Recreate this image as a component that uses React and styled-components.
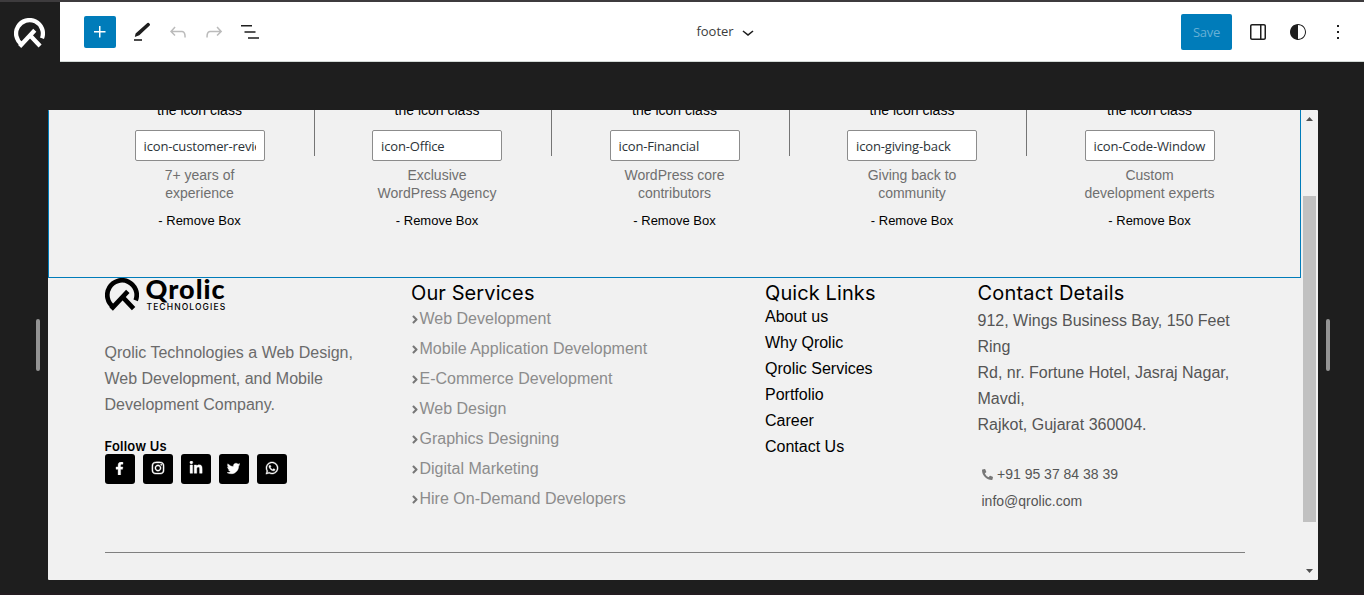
import React from "react";
import styled, { createGlobalStyle } from "styled-components";
import { FaFacebookF, FaInstagram, FaLinkedinIn, FaTwitter, FaWhatsapp, FaPhoneAlt, FaAngleRight } from "react-icons/fa";

const sans = `"Liberation Sans", Arial, sans-serif`;
const ui = `"Open Sans", "Noto Sans", sans-serif`;

const GlobalStyle = createGlobalStyle`
  *, *::before, *::after { box-sizing: border-box; }
  body { margin: 0; background: #1e1e1e; font-family: ${sans}; overflow: hidden; }
  h2, p, ul { margin: 0; padding: 0; font-weight: 400; }
  ul { list-style: none; }
  svg { display: block; flex: none; }
`;

const Editor = styled.div`
  display: flex;
  flex-direction: column;
  width: 1364px;
  height: 595px;
  border-top: 2px solid #3d3b3d;
  border-bottom: 2px solid #231c20;
  background: #1e1e1e;
`;

const TopBar = styled.header`
  display: flex;
  flex: none;
  height: 60px;
`;

const SiteHub = styled.div`
  display: flex;
  width: 60px;
  padding: 16px 0 0 14px;
  color: #fff;
`;

const Toolbar = styled.div`
  display: grid;
  grid-template-columns: 1fr auto 1fr;
  align-items: center;
  flex: 1;
  background: #fff;
  border-bottom: 1px solid #d3dad6;
`;

const ToolGroup = styled.div`
  display: flex;
  align-items: center;
  padding-left: 24px;
`;

const InsertButton = styled.button`
  display: flex;
  align-items: center;
  justify-content: center;
  width: 32px;
  height: 32px;
  margin-right: 8px;
  padding: 0;
  border: 0;
  border-radius: 2px;
  background: #007cba;
  color: #fff;
`;

const ToolButton = styled.button`
  display: flex;
  align-items: center;
  justify-content: center;
  width: ${(p) => p.$width || 36}px;
  height: 36px;
  padding: 0;
  border: 0;
  background: none;
  color: ${(p) => (p.$disabled ? "#bbb" : "#1e1e1e")};
`;

const DocumentTitle = styled.div`
  display: flex;
  align-items: center;
  gap: 3px;
  padding: 0 0 2px 33px;
  font: 13px/20px ${ui};
  letter-spacing: -0.05px;
  color: #3c3c3c;

  svg { margin-top: 2px; color: #1e1e1e; }
`;

const Actions = styled.div`
  display: flex;
  align-items: center;
  justify-content: flex-end;
  padding-right: 6px;
`;

const SaveButton = styled.button`
  width: 51px;
  height: 36px;
  margin-right: 6px;
  padding: 0;
  border: 0;
  border-radius: 2px;
  background: #007cba;
  color: #66b0d6;
  font: 13px/36px ${ui};
  letter-spacing: -0.3px;
`;

const Stage = styled.main`
  display: flex;
  padding: 48px 34px 0 36px;
  gap: 8px;
`;

const Handle = styled.div`
  width: 4px;
  height: 52px;
  margin-top: 209px;
  border-radius: 2px;
  background: #949494;
`;

const Frame = styled.section`
  display: flex;
  width: 1270px;
  height: 470px;
  border-radius: 1px;
  overflow: hidden;
  background: #f1f1f1;
`;

const Canvas = styled.div`
  width: 1253px;
  overflow: hidden;
`;

const ScrollBar = styled.div`
  display: flex;
  flex-direction: column;
  align-items: center;
  width: 17px;
  padding: 7px 0;
`;

const ScrollThumb = styled.div`
  width: 13px;
  height: 326px;
  margin: 75px 0 auto;
  background: #c1c1c1;
`;

const SelectedBlock = styled.div`
  display: flex;
  height: 168px;
  padding-left: 31.75px;
  border: solid #007cba;
  border-width: 0 1px 1px;
`;

const Cell = styled.div`
  display: flex;
  width: 237.5px;
  padding: 0 3.5px 0 4.5px;
`;

const BoxBody = styled.div`
  display: flex;
  flex: 1;
  flex-direction: column;
  align-items: center;
  text-align: center;
`;

const Divider = styled.div`
  width: 1px;
  height: 46px;
  background: ${(p) => (p.$hidden ? "transparent" : "#757575")};
`;

const Hint = styled.p`
  margin: -9px 0 11px;
  font-size: 14px;
  line-height: 18px;
  color: #000;
`;

const ClassInput = styled.input`
  width: 130px;
  height: 31px;
  padding: 1px 7.5px 0 8px;
  border: 1px solid #8c8c8c;
  border-radius: 2px;
  background: #fff;
  color: #2c3338;
  font: 13px/20px ${ui};
  letter-spacing: -0.15px;
`;

const BoxLabel = styled.p`
  margin-top: 5px;
  font-size: 14px;
  line-height: 18px;
  color: #6f6f6f;
  white-space: pre-line;
`;

const RemoveBox = styled.p`
  margin-top: 10px;
  font: 13px/18px ${sans};
  color: #000;
`;

const Footer = styled.footer`
  padding: 0 56px 0 56.5px;
`;

const Columns = styled.div`
  display: grid;
  grid-template-columns: 306.5px 354px 212.5px 1fr;
  height: 275px;
  border-bottom: 1px solid #808080;
`;

const Column = styled.div`
  display: flex;
  flex-direction: column;
`;

const Brand = styled.div`
  display: flex;
  gap: 7px;
  height: 34px;
`;

const BrandText = styled.div`
  display: flex;
  flex-direction: column;
`;

const BrandName = styled.span`
  margin-top: -3px;
  font: 900 27px/28px "Lato", sans-serif;
  letter-spacing: 1px;
`;

const BrandSub = styled.span`
  padding-left: 1px;
  font: 500 8.5px/8px "Inter", sans-serif;
  letter-spacing: 1.1px;
`;

const About = styled.p`
  width: 260px;
  margin-top: 28px;
  font-size: 16px;
  line-height: 26px;
  color: #6b6b6b;
`;

const FollowTitle = styled.p`
  margin-top: 20px;
  font: 600 13px/16px "Inter", ${sans};
  letter-spacing: 0.2px;
`;

const SocialRow = styled.div`
  display: flex;
  gap: 8px;
`;

const SocialLink = styled.a`
  display: flex;
  align-items: center;
  justify-content: center;
  width: 30px;
  height: 30px;
  padding-bottom: 2px;
  border-radius: 3px;
  background: #000;
  color: #fff;
  font-size: ${(p) => p.$size}px;

  svg { stroke: currentColor; stroke-width: 14px; }
`;

const Heading = styled.h2`
  font: 400 20px/26px "Inter", ${sans};
  letter-spacing: ${(p) => p.$spacing ?? 0.1}px;
  color: #000;
  margin-top: 2px;
`;

const ServiceItem = styled.li`
  display: flex;
  align-items: center;
  height: 30px;
  color: #8c8c8c;
  font-size: 16px;

  svg { width: 8px; height: 13px; margin: 1px 0.5px 0 0; color: #777; }
`;

const ServiceList = styled.ul`
  margin-top: -2px;
`;

const QuickItem = styled.li`
  font-size: 16px;
  line-height: 26px;
  color: #000;
`;

const QuickList = styled.ul`
  margin-top: -2px;
`;

const Address = styled.p`
  width: 262px;
  margin-top: 2px;
  font-size: 16px;
  line-height: 26px;
  color: #555;
`;

const ContactList = styled.div`
  margin: 23px 0 0 4px;
  font-size: 14px;
  line-height: 27px;
  color: #555;
`;

const ContactLine = styled.div`
  display: flex;
  align-items: center;
  gap: 4.5px;

  svg { width: 11px; height: 11px; margin-top: -1px; color: #777; }
`;

const Icon = ({ d, size = 24 }) => (
  <svg width={size} height={size} viewBox="0 0 24 24" fill="currentColor"><path d={d} /></svg>
);

const Mark = ({ width = 34 }) => (
  <svg width={width} height={width} viewBox="0 0 34 34" fill="none" stroke="currentColor" strokeWidth="4.7">
    <path d="M8.4 28.9A14.7 14.7 0 1 1 30.7 22.3" />
    <path d="M6.2 31.2L22.8 13.4M17.2 18.6L28.6 30.6" />
  </svg>
);

const Pen = () => (
  <svg width="24" height="24" viewBox="0 0 24 24" fill="currentColor">
    <path d="M17.4 3.1Q18.1 2.4 18.9 3L19.8 3.9Q20.4 4.7 19.7 5.4L9.3 15.2L4.8 17L5.6 13.4Z" />
    <path d="M4 19.2h8v1.6H4z" />
  </svg>
);

const Arrow = ({ up }) => (
  <svg width="7" height="4" viewBox="0 0 7 4" fill="#505050">
    <path d={up ? "M0 4L3.5 0L7 4Z" : "M0 0L3.5 4L7 0Z"} />
  </svg>
);

const icons = {
  plus: "M11 12.5V17.5H12.5V12.5H17.5V11H12.5V6H11V11H6V12.5H11Z",
  undo: "M18.3 11.7c-.6-.6-1.4-.9-2.3-.9H6.7l2.9-3.3-1.1-1-4.5 5L8.5 16l1-1-2.7-2.7H16c.5 0 .9.2 1.3.5 1 1 1 3.4 1 4.5v.3h1.5v-.2c0-1.5 0-4.3-1.5-5.7z",
  redo: "M15.6 6.5l-1.1 1 2.9 3.3H8c-.9 0-1.7.3-2.3.9-1.4 1.5-1.4 4.2-1.4 5.6v.2h1.5v-.3c0-1.1 0-3.5 1-4.5.3-.3.7-.5 1.3-.5h9.2L14.5 15l1.1 1.1 4.6-4.6-4.6-5z",
  list: "M3 5h11v1.5H3V5Zm3.5 6.2h11v1.5h-11v-1.5ZM21 17.3H10v1.5h11v-1.5Z",
  chevron: "M17.5 11.6L12 16l-5.5-4.4.9-1.2L12 14l4.5-3.6 1 1.2z",
  drawer: "M18 4H6c-1.1 0-2 .9-2 2v12c0 1.1.9 2 2 2h12c1.1 0 2-.9 2-2V6c0-1.1-.9-2-2-2zm-4 14.5H6c-.3 0-.5-.2-.5-.5V6c0-.3.2-.5.5-.5h8v13zm4.5-.5c0 .3-.2.5-.5.5h-2.5v-13H18c.3 0 .5.2.5.5v12z",
  styles: "M12 4c-4.4 0-8 3.6-8 8v.1c0 4.1 3.2 7.5 7.2 7.9h.8c4.4 0 8-3.6 8-8s-3.6-8-8-8zm0 15V5c3.9 0 7 3.1 7 7s-3.1 7-7 7z",
  more: "M13 19h-2v-2h2v2zm0-6h-2v-2h2v2zm0-6h-2V5h2v2z",
};

const boxes = [
  ["icon-customer-review", "7+ years of\nexperience"],
  ["icon-Office", "Exclusive\nWordPress Agency"],
  ["icon-Financial", "WordPress core\ncontributors"],
  ["icon-giving-back", "Giving back to\ncommunity"],
  ["icon-Code-Window", "Custom\ndevelopment experts"],
];

const services = [
  "Web Development",
  "Mobile Application Development",
  "E-Commerce Development",
  "Web Design",
  "Graphics Designing",
  "Digital Marketing",
  "Hire On-Demand Developers",
];

const quickLinks = ["About us", "Why Qrolic", "Qrolic Services", "Portfolio", "Career", "Contact Us"];

const socials = [
  [FaFacebookF, 13],
  [FaInstagram, 14],
  [FaLinkedinIn, 14],
  [FaTwitter, 13],
  [FaWhatsapp, 14],
];

export default function App() {
  return (
    <Editor>
      <GlobalStyle />
      <TopBar>
        <SiteHub><Mark width={31} /></SiteHub>
        <Toolbar>
          <ToolGroup>
            <InsertButton><Icon d={icons.plus} /></InsertButton>
            <ToolButton><Pen /></ToolButton>
            <ToolButton $disabled><Icon d={icons.undo} /></ToolButton>
            <ToolButton $disabled><Icon d={icons.redo} /></ToolButton>
            <ToolButton><Icon d={icons.list} /></ToolButton>
          </ToolGroup>
          <DocumentTitle>footer<Icon d={icons.chevron} /></DocumentTitle>
          <Actions>
            <SaveButton>Save</SaveButton>
            <ToolButton $width={40}><Icon d={icons.drawer} /></ToolButton>
            <ToolButton $width={40}><Icon d={icons.styles} /></ToolButton>
            <ToolButton $width={40}><Icon d={icons.more} /></ToolButton>
          </Actions>
        </Toolbar>
      </TopBar>
      <Stage>
        <Handle />
        <Frame>
          <Canvas>
            <SelectedBlock>
              {boxes.map(([value, label], i) => (
                <Cell key={value}>
                  <BoxBody>
                    <Hint>the icon class</Hint>
                    <ClassInput defaultValue={value} />
                    <BoxLabel>{label}</BoxLabel>
                    <RemoveBox>- Remove Box</RemoveBox>
                  </BoxBody>
                  <Divider $hidden={i === boxes.length - 1} />
                </Cell>
              ))}
            </SelectedBlock>
            <Footer>
              <Columns>
                <Column>
                  <Brand>
                    <Mark />
                    <BrandText>
                      <BrandName>Qrolic</BrandName>
                      <BrandSub>TECHNOLOGIES</BrandSub>
                    </BrandText>
                  </Brand>
                  <About>Qrolic Technologies a Web Design, Web Development, and Mobile Development Company.</About>
                  <FollowTitle>Follow Us</FollowTitle>
                  <SocialRow>
                    {socials.map(([Social, size], i) => (
                      <SocialLink key={i} $size={size}><Social /></SocialLink>
                    ))}
                  </SocialRow>
                </Column>
                <Column>
                  <Heading>Our Services</Heading>
                  <ServiceList>
                    {services.map((s) => <ServiceItem key={s}><FaAngleRight />{s}</ServiceItem>)}
                  </ServiceList>
                </Column>
                <Column>
                  <Heading>Quick Links</Heading>
                  <QuickList>
                    {quickLinks.map((q) => <QuickItem key={q}>{q}</QuickItem>)}
                  </QuickList>
                </Column>
                <Column>
                  <Heading $spacing={0.2}>Contact Details</Heading>
                  <Address>
                    912, Wings Business Bay, 150 Feet Ring<br />
                    Rd, nr. Fortune Hotel, Jasraj Nagar, Mavdi,<br />
                    Rajkot, Gujarat 360004.
                  </Address>
                  <ContactList>
                    <ContactLine><FaPhoneAlt />+91 95 37 84 38 39</ContactLine>
                    <ContactLine>info@qrolic.com</ContactLine>
                  </ContactList>
                </Column>
              </Columns>
            </Footer>
          </Canvas>
          <ScrollBar>
            <Arrow up />
            <ScrollThumb />
            <Arrow />
          </ScrollBar>
        </Frame>
        <Handle />
      </Stage>
    </Editor>
  );
}
